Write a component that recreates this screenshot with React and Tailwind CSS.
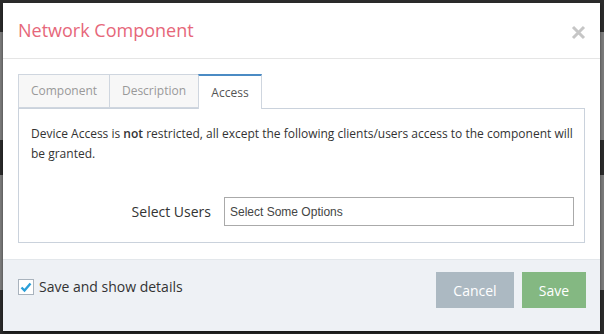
export default function App() {
  const font = { fontFamily: '"Open Sans", sans-serif' };
  return (
    <div
      className="w-[604px] h-[334px] overflow-hidden pt-[3px] pl-[3px] bg-[linear-gradient(to_bottom,#2b2b2b_0px,#2b2b2b_32px,#7c7c7c_32px,#7c7c7c_140px,#2b2b2b_140px,#2b2b2b_175px,#7c7c7c_175px,#7c7c7c_290px,#2b2b2b_290px)]"
      style={font}
    >
      <div className="w-[597px] h-[328px] bg-white flex flex-col shadow-[0_2px_3px_rgba(0,0,0,0.5)]">
        {/* Header */}
        <div className="h-[56px] flex items-center justify-between pl-[15px] pr-[14px] border-b border-[#e5e5e5] shrink-0">
          <div className="text-[18px] text-[#e6677a] leading-none -mt-[1px]">Network Component</div>
          <svg width="15" height="15" viewBox="0 0 15 15" className="mt-[3px]">
            <path d="M2 2 L13 13 M13 2 L2 13" stroke="#c6c6c6" strokeWidth="3" />
          </svg>
        </div>
        {/* Body */}
        <div className="flex-1 px-[15px] pt-[15px] pb-[16px]">
          <div className="flex h-[34px]">
            <div className="w-[92px] h-[34px] bg-[#f7f7f7] border border-[#cfd6df] flex items-center justify-center text-[12px] text-[#999]">
              Component
            </div>
            <div className="w-[89px] h-[34px] bg-[#f7f7f7] border border-l-0 border-[#cfd6df] flex items-center justify-center text-[12px] text-[#999]">
              Description
            </div>
            <div className="w-[64px] h-[35px] bg-white border-x border-[#cfd6df] border-t-2 border-t-[#4b8bc4] flex items-center justify-center text-[12px] text-[#555] relative z-10 -ml-[1px]">
              Access
            </div>
          </div>
          <div className="h-[135px] border border-[#cad2dc] pl-[12px] pr-[4px] pt-[15px]">
            <p className="text-[12px] leading-[20px] text-[#333]">
              Device Access is <span className="font-semibold">not</span> restricted, all except the following clients/users access to the component will be granted.
            </p>
            <div className="flex items-center mt-[33px]">
              <div className="w-[193px] shrink-0 text-right pr-[13px] text-[14px] text-[#333]">Select Users</div>
              <div className="w-[350px] shrink-0 h-[29px] border border-[#aaa] flex items-center pl-[5px] text-[12px] text-[#444]" style={{ fontFamily: '"Liberation Sans", Arial, sans-serif' }}>
                Select Some Options
              </div>
            </div>
          </div>
        </div>
        {/* Footer */}
        <div className="h-[72px] bg-[#eef1f5] border-t border-[#e3e7eb] flex items-start justify-between pl-[15px] pr-[14px] pt-[12px] shrink-0">
          <label className="flex items-center gap-[5px] text-[14px] text-[#333] mt-[4px]">
            <span className="w-[16px] h-[16px] border border-[#a9b3bd] bg-white flex items-center justify-center">
              <svg width="12" height="12" viewBox="0 0 12 12">
                <path d="M1.5 6.5 L4.5 9.5 L10.5 2.5" stroke="#2a9fd8" strokeWidth="2.4" fill="none" />
              </svg>
            </span>
            Save and show details
          </label>
          <div className="flex gap-[8px]">
            <button className="w-[78px] h-[36px] bg-[#acb9c2] text-white text-[14px]">Cancel</button>
            <button className="w-[64px] h-[36px] bg-[#84b882] text-white text-[14px]">Save</button>
          </div>
        </div>
      </div>
    </div>
  );
}
